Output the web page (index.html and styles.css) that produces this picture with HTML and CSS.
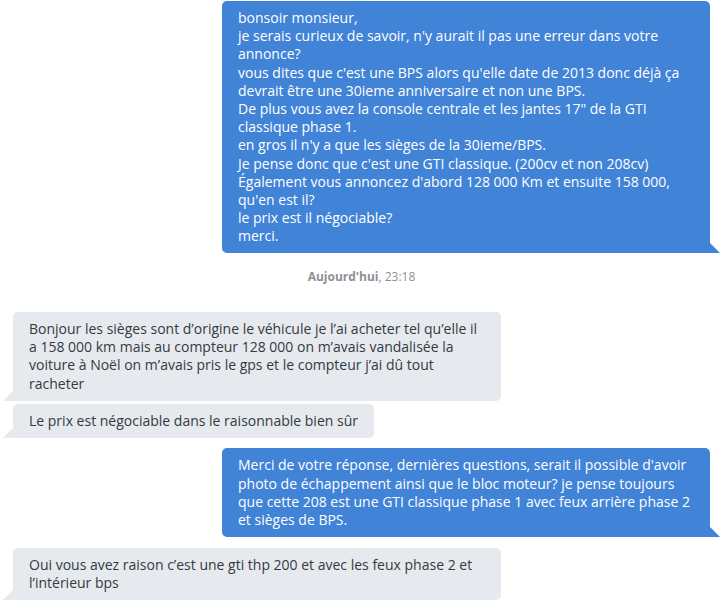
FILE: index.html
```html
<!DOCTYPE html>
<html lang="fr">
<head>
<meta charset="utf-8">
<title>Conversation</title>
<link rel="stylesheet" href="styles.css">
</head>
<body>
<div class="chat">
  <div class="msg out">bonsoir monsieur,<br>je serais curieux de savoir, n'y aurait il pas une erreur dans votre annonce?<br>vous dites que c'est une BPS alors qu'elle date de 2013 donc déjà ça devrait être une 30ieme anniversaire et non une BPS.<br>De plus vous avez la console centrale et les jantes 17" de la GTI classique phase 1.<br>en gros il n'y a que les sièges de la 30ieme/BPS.<br>Je pense donc que c'est une GTI classique. (200cv et non 208cv)<br>Également vous annoncez d'abord 128 000 Km et ensuite 158 000, qu'en est il?<br>le prix est il négociable?<br>merci.</div>

  <div class="stamp"><b>Aujourd'hui</b>, 23:18</div>

  <div class="msg in">Bonjour les sièges sont d’origine le véhicule je l’ai acheter tel qu’elle il a 158 000 km mais au compteur 128 000 on m’avais vandalisée la voiture à Noël on m’avais pris le gps et le compteur j’ai dû tout racheter</div>
  <div class="msg in same">Le prix est négociable dans le raisonnable bien sûr</div>

  <div class="msg out next">Merci de votre réponse, dernières questions, serait il possible d'avoir photo de échappement ainsi que le bloc moteur? je pense toujours que cette 208 est une GTI classique phase 1 avec feux arrière phase 2 et sièges de BPS.</div>

  <div class="msg in next">Oui vous avez raison c’est une gti thp 200 et avec les feux phase 2 et l’intérieur bps</div>
</div>
</body>
</html>
```

FILE: styles.css
```css
html, body {
  margin: 0;
  padding: 0;
  background: #ffffff;
}

body {
  font-family: "Open Sans", "Liberation Sans", sans-serif;
  font-size: 14px;
  line-height: 1.3;
  color: #333a40;
}

.chat {
  display: flex;
  flex-direction: column;
  padding: 1px 13px 0 13px;
}

.msg {
  position: relative;
  box-sizing: border-box;
  max-width: 488px;
  padding: 8px 16px;
  border-radius: 5px;
}

.msg.out {
  align-self: flex-end;
  background: #4183d7;
  color: #ffffff;
  border-bottom-right-radius: 0;
}

.msg.out::after {
  content: "";
  position: absolute;
  right: -10px;
  bottom: 0;
  width: 0;
  height: 0;
  border-left: 10px solid #4183d7;
  border-top: 10px solid transparent;
}

.msg.in {
  align-self: flex-start;
  background: #e6eaee;
  border-bottom-left-radius: 0;
}

.msg.in::after {
  content: "";
  position: absolute;
  left: -10px;
  bottom: 0;
  width: 0;
  height: 0;
  border-right: 10px solid #e6eaee;
  border-top: 10px solid transparent;
}

.msg.same {
  margin-top: 3px;
}

.msg.next {
  margin-top: 10.5px;
}

.stamp {
  align-self: center;
  margin: 16px 0 26.5px;
  font-size: 12px;
  line-height: 16px;
  color: #8c9198;
}

.stamp b {
  font-weight: 700;
}
```
